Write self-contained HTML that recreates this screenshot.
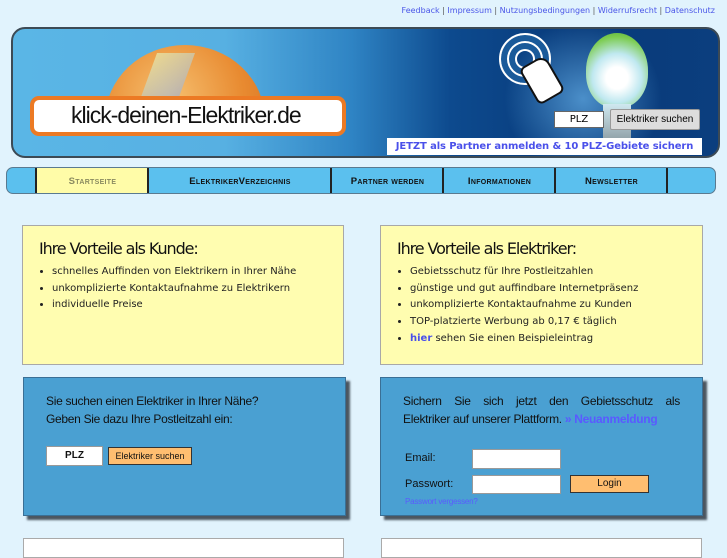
<!DOCTYPE html>
<html><head><meta charset="utf-8"><style>
*{margin:0;padding:0;box-sizing:border-box}
body{width:727px;height:545px;overflow:hidden;background:#e1f3fd;font-family:"DejaVu Sans",sans-serif;position:relative}
.a{position:absolute}
.top{right:12px;top:6px;font-size:8px;color:#555;font-family:"DejaVu Sans",sans-serif}
.top a{color:#4a56e8;text-decoration:none}
.banner{left:11px;top:27px;width:709px;height:131px;border:2px solid #3c4a55;border-radius:14px;overflow:hidden;background:linear-gradient(90deg,#5ab6e6 0%,#57b0e2 30%,#2f84c4 48%,#0d4a8e 62%,#083a7a 80%,#0b3e7e 100%)}
.nav{left:6px;top:167px;width:710px;height:27px;background:#5bc0ee;border:1px solid #5a7a90;border-radius:7px;overflow:hidden}
.nav div{position:absolute;top:0;height:27px;border-left:2px solid #222;font-size:9.5px;font-weight:bold;font-variant:small-caps;text-align:center;line-height:27px;color:#111;font-family:"Liberation Sans",sans-serif;letter-spacing:.3px}
.y{background:#fffdb0;border:1px solid #a8a8a8}
.y h2{font-family:"DejaVu Sans",sans-serif;font-weight:normal;font-size:16px;letter-spacing:-1.1px;color:#111;margin:13px 0 0 16px}
.y ul{margin:6px 0 0 29px;font-size:10px;color:#222;line-height:16.7px}
.b{background:#4aa0d2;border:1px solid #3a6f95;box-shadow:4px 4px 2px #4b5660;font-family:"Liberation Sans",sans-serif;color:#111}
</style></head><body>
<div class="a top"><a>Feedback</a> | <a>Impressum</a> | <a>Nutzungsbedingungen</a> | <a>Widerrufsrecht</a> | <a>Datenschutz</a></div>

<div class="a banner">
 <div class="a" style="left:92px;top:16px;width:160px;height:60px;overflow:hidden">
  <div class="a" style="left:0;top:0;width:160px;height:150px;border-radius:50%;background:radial-gradient(circle at 40% 35%,#f6c070,#e88a30 55%,#d06a20);"></div>
  <div class="a" style="left:42px;top:8px;width:38px;height:55px;background:linear-gradient(135deg,#e8eeb0,#9aa8d0);opacity:.7;transform:skew(-20deg)"></div>
 </div>
 <div class="a" style="left:17px;top:67px;width:316px;height:40px;background:#fff;border:4px solid #ec7a24;border-radius:9px;font-family:'Liberation Sans',sans-serif;font-size:23px;letter-spacing:-1px;line-height:31px;padding-left:37px;color:#111">klick-deinen-Elektriker.de</div>
 <div class="a" style="left:480px;top:-10px;width:180px;height:160px;border-radius:50%;background:radial-gradient(circle,rgba(120,200,255,.6),rgba(30,90,170,0) 65%)"></div>
 <div class="a" style="left:573px;top:4px;width:62px;height:75px;border-radius:50% 50% 45% 45%;background:radial-gradient(circle at 50% 60%,#fff 20%,#bfe8f0 45%,#7ccc50 75%,#4aa030);"></div>
 <div class="a" style="left:590px;top:75px;width:28px;height:40px;background:linear-gradient(#cfe8f0,#8a9aa0)"></div>
 <div class="a" style="left:486px;top:4px;width:52px;height:52px;border-radius:50%;border:2px solid #fff;box-shadow:inset 0 0 0 6px #1a5a9a,inset 0 0 0 8px #fff,inset 0 0 0 14px #1a5a9a,inset 0 0 0 16px #fff"></div>
 <div class="a" style="left:514px;top:30px;width:30px;height:42px;background:#fff;border:2px solid #111;border-radius:6px 10px 6px 6px;transform:rotate(-30deg)"></div>
 <div class="a" style="left:541px;top:82px;width:50px;height:17px;background:#fff;border:1px solid #666;font-size:10px;text-align:center;line-height:15px;font-family:'DejaVu Sans',sans-serif">PLZ</div>
 <div class="a" style="left:597px;top:80px;width:90px;height:21px;background:#ddd;border:1px solid #999;border-radius:2px;font-size:10px;text-align:center;line-height:19px;font-family:'Liberation Sans',sans-serif">Elektriker suchen</div>
 <div class="a" style="left:374px;top:109px;width:315px;height:17px;background:#fff;color:#4a50ea;font-weight:bold;font-size:10px;letter-spacing:-.1px;line-height:17px;text-align:center;white-space:nowrap">JETZT als Partner anmelden &amp; 10 PLZ-Gebiete sichern</div>
</div>

<div class="a nav">
 <div style="left:28px;width:113px;background:#fffca8;color:#8a8a60">Startseite</div>
 <div style="left:140px;width:184px">ElektrikerVerzeichnis</div>
 <div style="left:323px;width:113px">Partner werden</div>
 <div style="left:435px;width:113px">Informationen</div>
 <div style="left:547px;width:113px">Newsletter</div>
 <div style="left:659px;width:60px"></div>
</div>

<div class="a y" style="left:22px;top:225px;width:322px;height:140px">
 <h2>Ihre Vorteile als Kunde:</h2>
 <ul><li>schnelles Auffinden von Elektrikern in Ihrer Nähe</li><li>unkomplizierte Kontaktaufnahme zu Elektrikern</li><li>individuelle Preise</li></ul>
</div>
<div class="a y" style="left:380px;top:225px;width:323px;height:140px">
 <h2>Ihre Vorteile als Elektriker:</h2>
 <ul><li>Gebietsschutz für Ihre Postleitzahlen</li><li>günstige und gut auffindbare Internetpräsenz</li><li>unkomplizierte Kontaktaufnahme zu Kunden</li><li>TOP-platzierte Werbung ab 0,17 € täglich</li><li><b style="color:#4a50ea">hier</b> sehen Sie einen Beispieleintrag</li></ul>
</div>

<div class="a b" style="left:23px;top:377px;width:323px;height:139px">
 <div class="a" style="left:22px;top:14px;font-size:12px;line-height:18px;letter-spacing:-.3px">Sie suchen einen Elektriker in Ihrer Nähe?<br>Geben Sie dazu Ihre Postleitzahl ein:</div>
 <div class="a" style="left:22px;top:68px;width:57px;height:20px;background:#fff;border:1px solid #999;font-weight:bold;font-size:10px;text-align:center;line-height:18px">PLZ</div>
 <div class="a" style="left:84px;top:69px;width:84px;height:18px;background:#ffbe70;border:1px solid #333;font-size:9px;text-align:center;line-height:16px">Elektriker suchen</div>
</div>
<div class="a b" style="left:380px;top:377px;width:323px;height:139px">
 <div class="a" style="left:22px;top:14px;width:277px;display:flex;justify-content:space-between;font-size:12px;line-height:18px;letter-spacing:-.3px"><span>Sichern</span><span>Sie</span><span>sich</span><span>jetzt</span><span>den</span><span>Gebietsschutz</span><span>als</span></div>
 <div class="a" style="left:22px;top:32px;font-size:12px;line-height:18px;letter-spacing:-.3px;white-space:nowrap">Elektriker auf unserer Plattform. <b style="color:#5a5aff">» Neuanmeldung</b></div>
 <div class="a" style="left:24px;top:74px;font-size:11px">Email:</div>
 <div class="a" style="left:91px;top:71px;width:89px;height:20px;background:#fff;border:1px solid #999"></div>
 <div class="a" style="left:24px;top:100px;font-size:11px">Passwort:</div>
 <div class="a" style="left:91px;top:97px;width:89px;height:19px;background:#fff;border:1px solid #999"></div>
 <div class="a" style="left:189px;top:97px;width:79px;height:18px;background:#ffbe70;border:1px solid #333;font-size:10px;text-align:center;line-height:16px">Login</div>
 <div class="a" style="left:24px;top:119px;font-size:8px;color:#5a5aff;letter-spacing:-.2px">Passwort vergessen?</div>
</div>

<div class="a" style="left:23px;top:538px;width:321px;height:20px;background:#fff;border:1px solid #aaa"></div>
<div class="a" style="left:381px;top:538px;width:321px;height:20px;background:#fff;border:1px solid #aaa"></div>
</body></html>
